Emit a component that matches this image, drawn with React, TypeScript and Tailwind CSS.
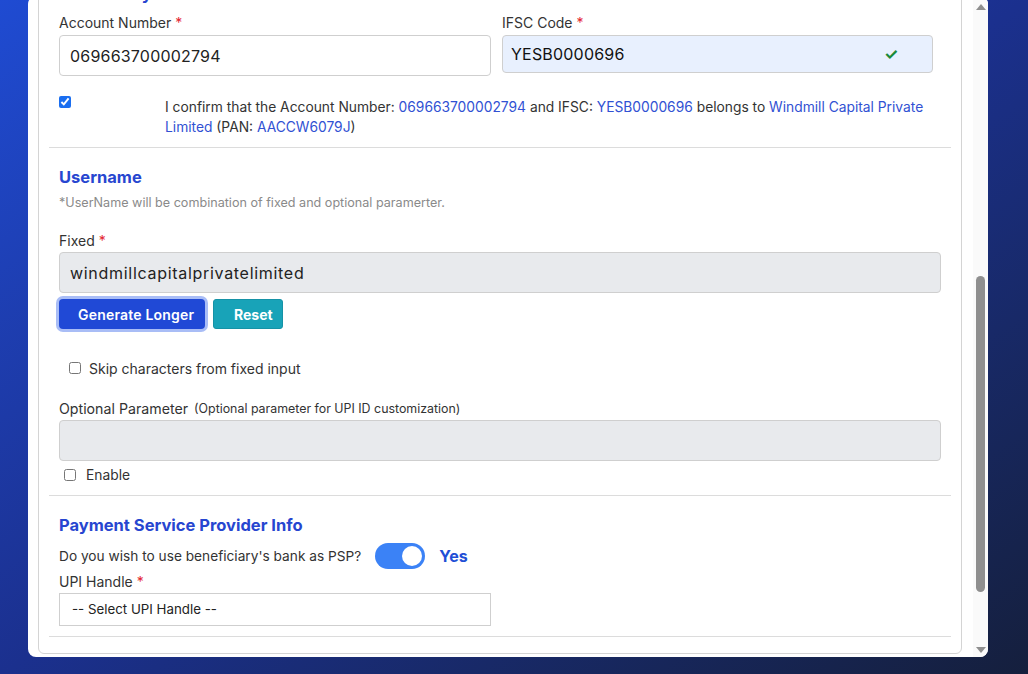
import React from "react";

const font = "font-['Inter','Noto_Sans',sans-serif]";

function Req() {
  return <span className="ml-1 text-[#e3262f]">*</span>;
}

function Label({ children }: { children: React.ReactNode }) {
  return <div className="flex h-[20px] items-center text-[14px] text-[#333]">{children}</div>;
}

export default function App() {
  return (
    <div className={`h-[674px] w-full overflow-hidden bg-gradient-to-br from-[#1f4bd2] via-[#1b308e] to-[#151f3d] ${font}`}>
      <div className="-mt-[4px] ml-[28px] flex h-[661px] w-[960px] overflow-hidden rounded-lg bg-white">
        <div className="flex-1 overflow-hidden pl-[10px] pr-[11px]">
          <div className="-mt-[36px] h-[694px] rounded-b-md border border-[#d4d4d4]">
            {/* bank account */}
            <div className="mx-[10px] border-b border-[#dcdcdc] px-[10px] pt-[21px] pb-[10px]">
              <h2 className="h-[24px] text-[16.5px] leading-[24px] font-bold text-[#2746d0]">Beneficiary Bank Details</h2>
              <div className="mt-[6px] grid grid-cols-[432px_431px] gap-[11px]">
                <div>
                  <Label>
                    Account Number<Req />
                  </Label>
                  <input
                    readOnly
                    defaultValue="069663700002794"
                    className="mt-[3px] h-[41px] w-full rounded border border-[#cfcfcf] px-[10px] text-[16px] tracking-[0.2px] text-[#222] outline-none"
                  />
                </div>
                <div>
                  <Label>
                    IFSC Code<Req />
                  </Label>
                  <div className="mt-[3px] flex h-[38px] items-center justify-between rounded border border-[#cfcfcf] bg-[#e8f0fe] pr-[34px] pl-[8px]">
                    <span className="text-[16px] tracking-[0.2px] text-[#111]">YESB0000696</span>
                    <span className="text-[16px] font-bold text-[#1a8a3a]">✓</span>
                  </div>
                </div>
              </div>
              <div className="mt-[20px] flex items-start">
                <div className="w-[106px] shrink-0">
                  <input type="checkbox" defaultChecked className="m-0 block h-[12px] w-[12px] accent-[#1a6ef0]" />
                </div>
                <div className="pt-[1px] text-[13.8px] leading-[20px] text-[#333]">
                  <p>
                    I confirm that the Account Number: <span className="text-[#3151d3]">069663700002794</span> and IFSC:{" "}
                    <span className="text-[#3151d3]">YESB0000696</span> belongs to{" "}
                    <span className="text-[#3151d3]">Windmill Capital Private</span>
                  </p>
                  <p>
                    <span className="text-[#3151d3]">Limited</span> (PAN: <span className="text-[#3151d3]">AACCW6079J</span>)
                  </p>
                </div>
              </div>
            </div>

            {/* username */}
            <div className="mx-[10px] border-b border-[#dcdcdc] px-[10px] pt-[17px] pb-[10px]">
              <h2 className="h-[24px] text-[16.5px] leading-[24px] font-bold text-[#2746d0]">Username</h2>
              <p className="mt-[6px] h-[16px] text-[12.6px] leading-[16px] text-[#8a8a8a]">
                *UserName will be combination of fixed and optional paramerter.
              </p>
              <div className="mt-[19px]">
                <Label>
                  Fixed<Req />
                </Label>
              </div>
              <input
                readOnly
                defaultValue="windmillcapitalprivatelimited"
                className="mt-[2px] h-[41px] w-full rounded border border-[#cfcfcf] bg-[#e8eaed] px-[10px] text-[16px] tracking-[0.7px] text-[#222] outline-none"
              />
              <div className="mt-[6px] flex gap-[8px]">
                <button className="h-[30px] w-[146px] rounded-[4px] bg-[#2049d6] pr-[6px] pl-[19px] text-left text-[14px] font-semibold tracking-[0.2px] text-white ring-[3px] ring-[#a9bdf6]">
                  Generate Longer
                </button>
                <button className="h-[30px] w-[70px] rounded-[3px] border border-[#1592a6] bg-[#18a3b8] pl-[20px] text-left text-[14px] font-bold text-white">
                  Reset
                </button>
              </div>
              <label className="mt-[29px] flex h-[20px] items-center gap-[8px] pl-[10px] text-[14px] text-[#333]">
                <input type="checkbox" className="m-0 h-[12px] w-[12px]" />
                Skip characters from fixed input
              </label>
              <div className="mt-[21px] flex h-[20px] items-center gap-[6px]">
                <span className="text-[14.2px] text-[#333]">Optional Parameter</span>
                <span className="text-[12.4px] text-[#333]">(Optional parameter for UPI ID customization)</span>
              </div>
              <input
                readOnly
                className="mt-[1px] h-[41px] w-full rounded border border-[#cfcfcf] bg-[#e8eaed] px-[11px] text-[16px] outline-none"
              />
              <label className="mt-[4px] flex h-[20px] items-center gap-[10px] pl-[5px] text-[13.8px] text-[#333]">
                <input type="checkbox" className="m-0 h-[12px] w-[12px]" />
                Enable
              </label>
            </div>

            {/* psp */}
            <div className="mx-[10px] border-b border-[#dcdcdc] px-[10px] pt-[17px] pb-[10px]">
              <h2 className="h-[24px] text-[16.5px] leading-[24px] font-bold text-[#2746d0]">
                Payment Service Provider Info
              </h2>
              <div className="mt-[6px] flex h-[26px] items-center">
                <span className="text-[13.7px] text-[#333]">Do you wish to use beneficiary's bank as PSP?</span>
                <div className="ml-[14px] flex h-[26px] w-[50px] items-center justify-end rounded-full bg-[#3b82f6] pr-[3px]">
                  <div className="h-[20px] w-[20px] rounded-full bg-white" />
                </div>
                <span className="ml-[14px] text-[16px] font-bold text-[#1f4fd6]">Yes</span>
              </div>
              <div className="mt-[2px]">
                <Label>
                  UPI Handle<Req />
                </Label>
              </div>
              <select className="mt-[2px] h-[33px] w-[432px] appearance-none border border-[#cfcfcf] bg-white px-[12px] text-[13.3px] text-[#222] outline-none">
                <option>-- Select UPI Handle --</option>
              </select>
            </div>
          </div>
        </div>

        {/* scrollbar */}
        <div className="flex w-[15px] shrink-0 flex-col items-center bg-[#fafafa] pt-[8px] pb-[4px]">
          <div className="h-0 w-0 border-x-[5px] border-b-[6px] border-x-transparent border-b-[#8f8f8f]" />
          <div className="w-full flex-1 px-[3px] pt-[266px] pb-[55px]">
            <div className="h-full w-full rounded-full bg-[#8f8f8f]" />
          </div>
          <div className="h-0 w-0 border-x-[5px] border-t-[6px] border-x-transparent border-t-[#8f8f8f]" />
        </div>
      </div>
    </div>
  );
}
